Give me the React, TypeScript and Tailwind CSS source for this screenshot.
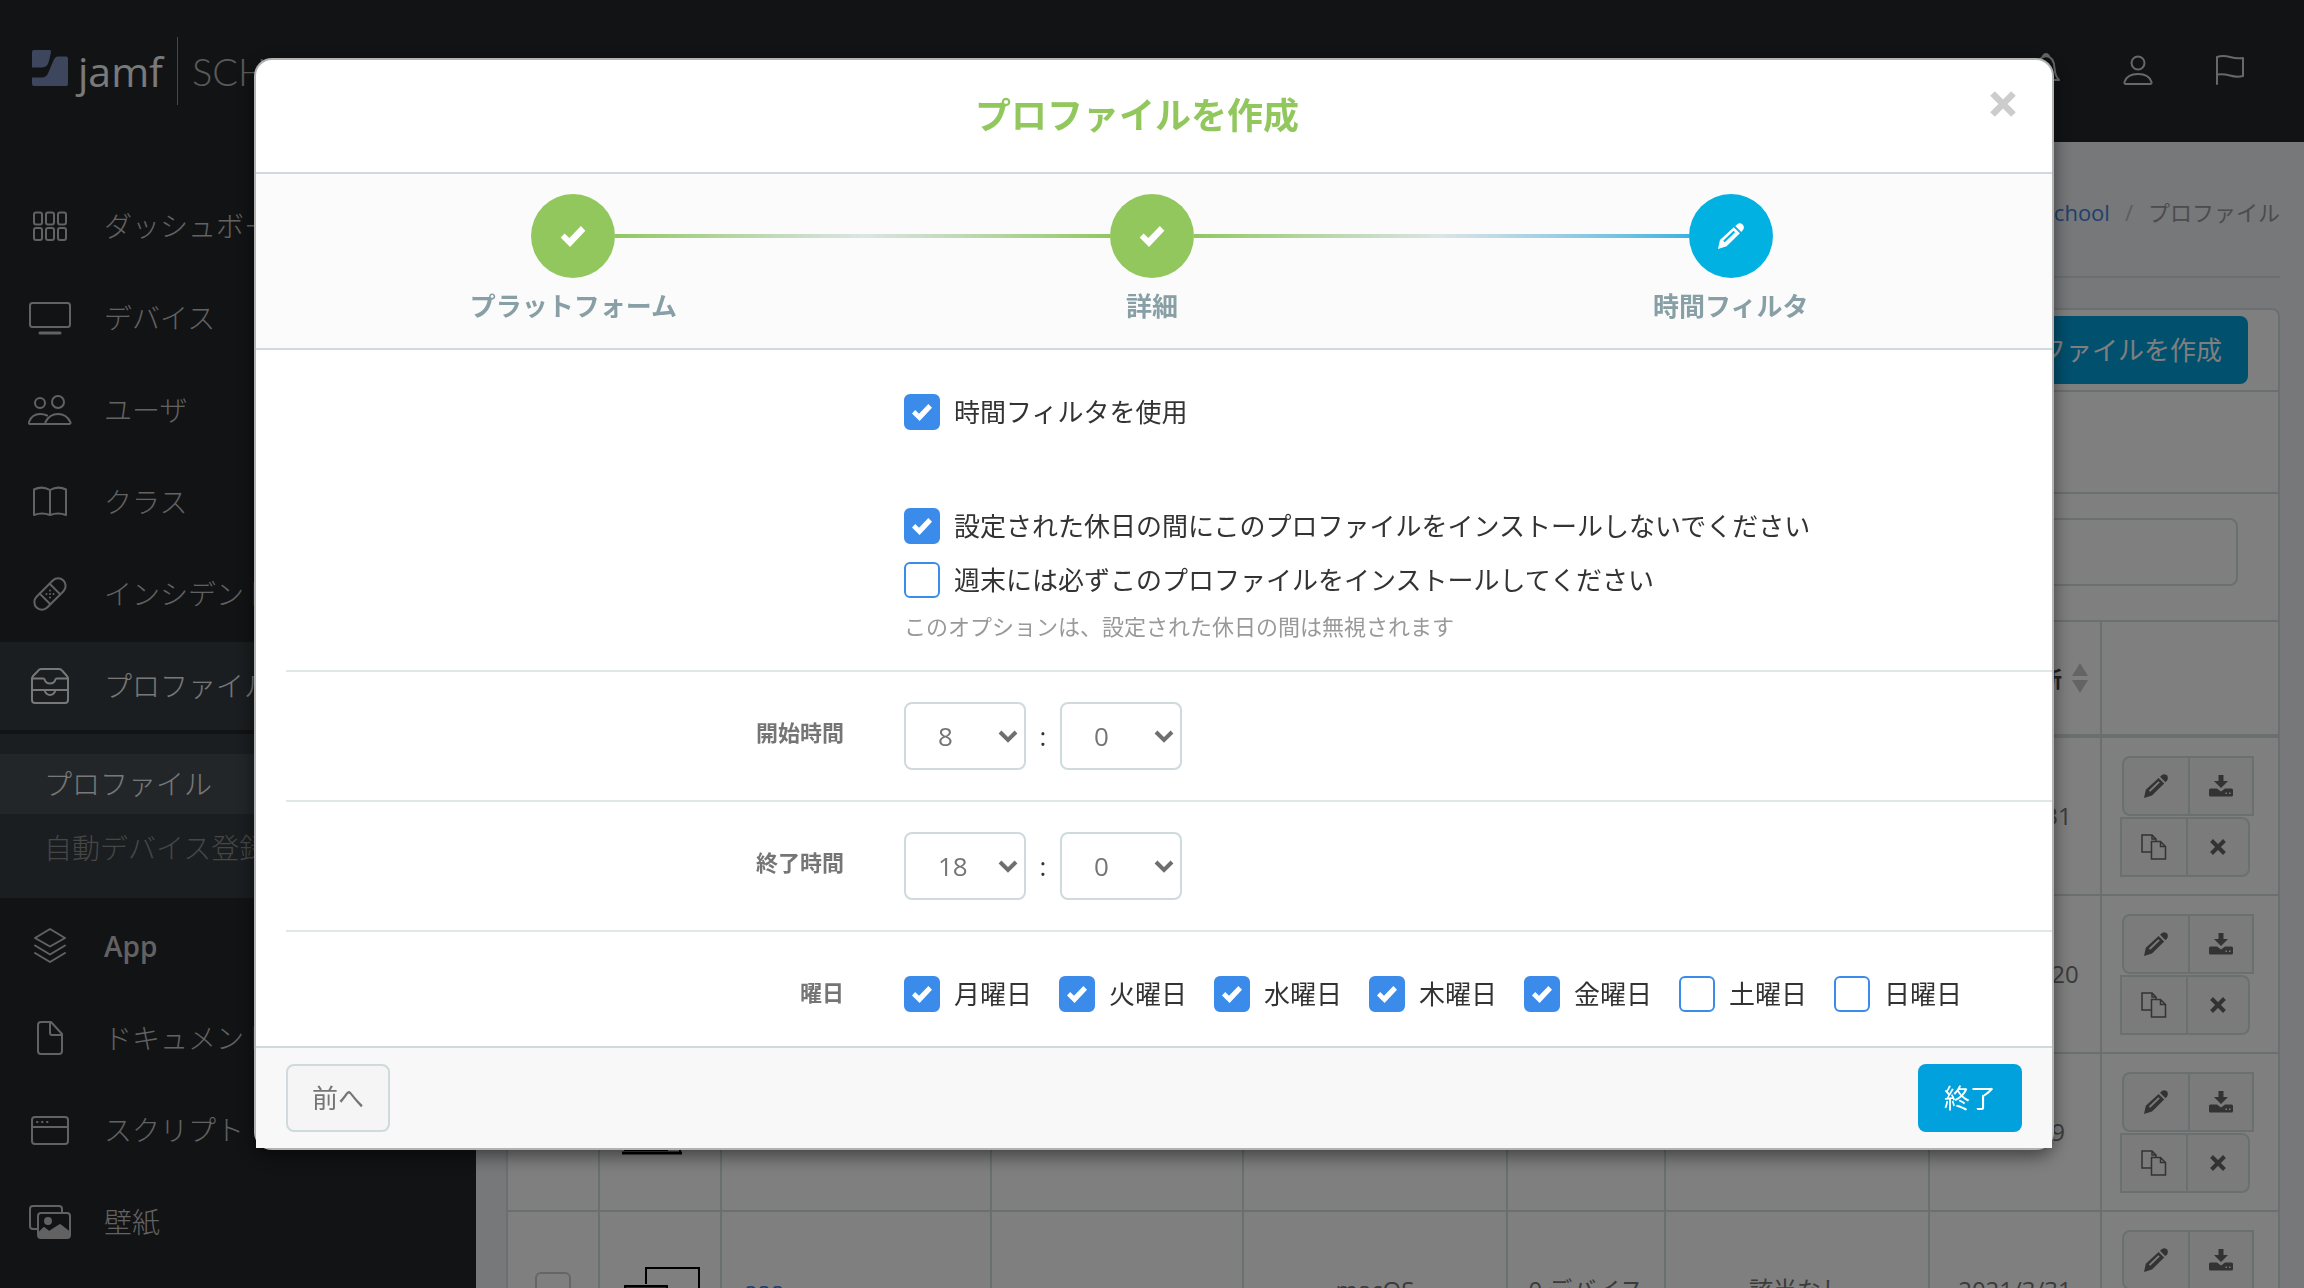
import { useState } from "react";
import type { ReactNode } from "react";

const CheckMark = ({ className }: { className?: string }) => (
  <svg viewBox="0 0 20 17" className={className} fill="currentColor">
    <path d="M0 9.4 3.2 6 7 9.8 16.4 0 20 3.8 7.6 17Z" />
  </svg>
);

const Pencil = ({ className }: { className?: string }) => (
  <svg viewBox="0 0 24 24" className={className} fill="currentColor">
    <path
      fillRule="evenodd"
      d="M0 24 1.8 15.8 14.6 4 20.2 9.4 8 21.4ZM6.2 17.8 15.8 8.6 14.4 7.2 4.8 16.4Z"
    />
    <path d="M16 2.8 18 .9Q20.400-.8 22.700 1.300 24.800 3.600 23.200 6.200L21.400 8.200Z" />
  </svg>
);

const Download = () => (
  <svg viewBox="0 0 24 22" className="h-[22px] w-6" fill="currentColor">
    <path d="M9.500 0h5v6h4.500l-7 7-7-7h4.500Z" />
    <path
      fillRule="evenodd"
      d="M1.500 13.500H8l4 3 4-3h6.500q1.500 0 1.500 1.500v5q0 1.500-1.500 1.500h-21Q0 21.500 0 20v-5q0-1.500 1.500-1.500ZM16.500 17.500v1.500h1.500v-1.500ZM20 17.500v1.500h1.500v-1.500Z"
    />
  </svg>
);

const Copy = () => (
  <svg
    viewBox="0 0 26 26"
    className="size-[26px]"
    fill="none"
    stroke="currentColor"
    strokeWidth="1.500"
  >
    <path d="M10 18H1V1h10l4 4v3M11 1v4h4" />
    <path d="M10.500 7.500h9l5 5V25h-14ZM19.500 7.500v5h5" />
  </svg>
);

const Cross = ({ className }: { className?: string }) => (
  <svg
    viewBox="0 0 26 26"
    className={className}
    stroke="currentColor"
    strokeWidth="6.500"
  >
    <path d="M2.500 2.500 23.500 23.500M23.500 2.500 2.500 23.500" />
  </svg>
);

const LineIcon = ({ children }: { children: ReactNode }) => (
  <svg
    viewBox="0 0 44 44"
    className="size-11 shrink-0"
    fill="none"
    stroke="currentColor"
    strokeWidth="2"
    strokeLinejoin="round"
    strokeLinecap="round"
  >
    {children}
  </svg>
);

const icons = {
  dashboard: (
    <LineIcon>
      {[6, 18, 30].map((x) =>
        [8.5, 24].map((y) => (
          <rect key={`${x}-${y}`} x={x} y={y} width="8" height="12" rx="2" />
        ))
      )}
    </LineIcon>
  ),
  devices: (
    <LineIcon>
      <rect x="2" y="7" width="40" height="24" rx="2.500" />
      <path d="M12 37h20" strokeWidth="3" />
    </LineIcon>
  ),
  users: (
    <LineIcon>
      <circle cx="12" cy="15" r="5" />
      <circle cx="30" cy="14" r="6" />
      <path d="M17 36H2Q.500 36 1 34 4 26 12 26q4 0 7 1.500M19 36h22.500q1.500 0 .800-2Q38.500 26 30 26t-12.500 8q-.500 2 1.500 2Z" />
    </LineIcon>
  ),
  classes: (
    <LineIcon>
      <path d="M22 10Q14 5.500 6 9.500V35q8-3 16 0 8-3 16 0V9.500Q30 5.500 22 10ZM22 10v25" />
    </LineIcon>
  ),
  incidents: (
    <LineIcon>
      <g transform="rotate(-45 22 22)">
        <rect x="3" y="14.500" width="38" height="15" rx="7.500" />
        <path d="M15 14.500v15M29 14.500v15" />
        <path d="M19.500 19.500v0M24.500 19.500v0M22 22v0M19.500 24.500v0M24.500 24.500v0" />
      </g>
    </LineIcon>
  ),
  profiles: (
    <LineIcon>
      <path d="M4 24.500V15q0-2 1.500-3.500l4-4Q11 5 13 5h18q2 0 3.500 2l4 4.500Q40 13 40 15v9.500" />
      <path d="M4 14.500h11.500q1 0 1.500 2 1 3 5 3t5-3q.500-2 1.500-2H40v11.500H4ZM4 26v10q0 3 3 3h30q3 0 3-3V26M16.500 26q1.500 5 5.500 5t5.500-5" />
    </LineIcon>
  ),
  apps: (
    <LineIcon>
      <path d="M22 5 37 14 22 22.500 7 14ZM7 21.500 22 30.500 37 21.500M7 29 22 38 37 29" />
    </LineIcon>
  ),
  documents: (
    <LineIcon>
      <path d="M23 6H13q-3 0-3 3v26q0 3 3 3h18q3 0 3-3V18ZM22 6v11q0 2 2 2h10" />
    </LineIcon>
  ),
  scripts: (
    <LineIcon>
      <rect x="4" y="9" width="36" height="27" rx="3" />
      <path d="M4 19h36M9 14h.500M14 14h.500M19 14h.500" />
    </LineIcon>
  ),
  wallpapers: (
    <LineIcon>
      <path d="M9 29H5q-3 0-3-3V9q0-3 3-3h26q3 0 3 3v3" />
      <rect x="10" y="13" width="32" height="25" rx="3" />
      <circle cx="20" cy="21" r="3" fill="currentColor" />
      <path
        fill="currentColor"
        d="M11 33 16 28l2.500 2 2.500 2 11-7 9 7v5H11Z"
      />
    </LineIcon>
  ),
};

const menuTop = [
  { icon: icons.dashboard, label: "ダッシュボード" },
  { icon: icons.devices, label: "デバイス" },
  { icon: icons.users, label: "ユーザ" },
  { icon: icons.classes, label: "クラス" },
  { icon: icons.incidents, label: "インシデント" },
  { icon: icons.profiles, label: "プロファイル", active: true },
];

const menuBottom = [
  { icon: icons.apps, label: "App" },
  { icon: icons.documents, label: "ドキュメント" },
  { icon: icons.scripts, label: "スクリプト" },
  { icon: icons.wallpapers, label: "壁紙" },
];

const rows = [
  { name: "aaa", date: "2021/3/31" },
  { name: "aaa", date: "2021/10/20" },
  { name: "aaa", date: "2021/4/9" },
  { name: "aaa", date: "2021/3/31" },
];

function MenuItem({
  icon,
  label,
  active,
}: {
  icon: ReactNode;
  label: string;
  active?: boolean;
}) {
  return (
    <a
      href="#"
      className={`flex h-[92px] items-center gap-8 border-y-2 border-[#24262a] pl-7 text-[28px] whitespace-nowrap ${
        active ? "bg-[#343c40] text-[#f0f0f0]" : "text-[#c4c4c4]"
      } ${label === "App" ? "font-semibold" : "font-light"}`}
    >
      {icon}
      {label}
    </a>
  );
}

function Sidebar() {
  return (
    <nav className="w-[476px] shrink-0 bg-[#24262a] pt-[38px]">
      {menuTop.map((item) => (
        <MenuItem key={item.label} {...item} />
      ))}
      <div className="my-0.5 flex flex-col gap-1 bg-[#343c40] py-5 text-[28px] leading-[60px] font-light">
        <a href="#" className="bg-[#444c50] pl-11 text-[#f0f0f0]">
          プロファイル
        </a>
        <a href="#" className="pl-11 text-[#8c8c8c]">
          自動デバイス登録プロファイル
        </a>
      </div>
      {menuBottom.map((item) => (
        <MenuItem key={item.label} {...item} />
      ))}
    </nav>
  );
}

function Header() {
  return (
    <header className="flex h-[142px] shrink-0 items-center justify-between bg-[#24262a] pr-[52px] pl-8">
      <div className="flex items-center">
        <svg viewBox="0 0 36 36" className="mb-1.5 size-9" fill="#7a8db8">
          <path d="M2 0h15.500q2 0 1.500 2-1 5-2 9-1.500 6.500-7 6.500H0V2Q0 0 2 0Z" />
          <path d="M26 6.500h8q2 0 2 2V34q0 2-2 2H2q-2 0-2-2v-6.500h10q4 0 6-4l5-12q2-5 5-5Z" />
        </svg>
        <span className="ml-2.5 text-[41px] leading-[60px] font-medium text-[#f4f4f4]">
          jamf
        </span>
        <span className="ml-3.5 h-[68px] w-px bg-[#8f8f8f]" />
        <span className="ml-3.5 font-[Lato] text-[38px] leading-[60px] font-light text-[#b4b4b4]">
          SCHOOL
        </span>
      </div>
      <div className="flex gap-12 text-[#d0d0d0]">
        <button aria-label="通知">
          <LineIcon>
            <path d="M9 31q4-4 4.500-12Q14 8 22 7q8 1 8.500 12Q31 27 35 31ZM19 7q3-4 6 0M18 31q1 5 4 5t4-5" />
          </LineIcon>
        </button>
        <button aria-label="アカウント">
          <LineIcon>
            <circle cx="22" cy="14" r="6.500" />
            <path d="M10 35h24q2 0 1.500-2Q33 25 22 25T8.500 33Q8 35 10 35Z" />
          </LineIcon>
        </button>
        <button aria-label="フラグ">
          <LineIcon>
            <path d="M9 35V8q6-2 13 0t13 1v18q-6 1.500-13-.500T9 25.500" />
          </LineIcon>
        </button>
      </div>
    </header>
  );
}

function DeviceIcon() {
  return (
    <svg viewBox="0 0 80 48" className="h-12 w-20" fill="none" stroke="#000" strokeWidth="2">
      <path d="M24 18V2h53v34H52M58 36v8M50 45h10" />
      <path fill="#555" d="M3 20h42v22H3Z" />
      <path d="M0 45h60" strokeWidth="3" />
    </svg>
  );
}

const actionButton =
  "grid h-[60px] place-items-center border-2 border-[#d4e0e0] bg-[#f6f6f6] text-[#666]";

function RowActions() {
  return (
    <div className="flex flex-col gap-px pl-[18px]">
      <div className="flex pl-0.5">
        <button aria-label="編集" className={`${actionButton} w-[68px] rounded-l-lg`}>
          <Pencil className="size-6" />
        </button>
        <button aria-label="ダウンロード" className={`${actionButton} -ml-0.5 w-[66px]`}>
          <Download />
        </button>
      </div>
      <div className="flex">
        <button aria-label="複製" className={`${actionButton} w-[68px]`}>
          <Copy />
        </button>
        <button aria-label="削除" className={`${actionButton} -ml-0.5 w-[64px] rounded-r-lg`}>
          <Cross className="size-4" />
        </button>
      </div>
    </div>
  );
}

function ProfileList() {
  return (
    <main className="min-w-0 flex-1 bg-[#eef0f4] pr-6 pl-[30px]">
      <div className="flex h-[136px] items-center justify-end gap-[15px] border-b-2 border-[#d4e0e0] pt-1.5 text-[22px]">
        <a href="#" className="text-[#3f80d8]">
          Jamf School
        </a>
        <span className="text-[#bbb]">/</span>
        <span className="text-[#999]">プロファイル</span>
      </div>

      <section className="mt-[30px] rounded-t-lg border-2 border-[#d4e0e0] bg-white">
        <div className="flex h-[82px] items-center justify-end border-b-2 border-[#d4e0e0] pr-[30px]">
          <button className="h-[68px] rounded-lg bg-[#00a0dc] px-[26px] text-[26px] text-white">
            プロファイルを作成
          </button>
        </div>
        <div className="h-[102px] border-b-2 border-[#d4e0e0]" />
        <div className="flex h-32 items-start justify-end border-b-2 border-[#d4e0e0] pt-6 pr-10">
          <input
            type="search"
            aria-label="検索"
            className="h-[68px] w-[440px] rounded-lg border-2 border-[#d4e0e0] bg-white"
          />
        </div>
        <table className="w-full table-fixed border-separate border-spacing-0 text-center text-[24px] text-[#777]">
          <colgroup>
            <col className="w-[92px]" />
            <col className="w-[122px]" />
            <col className="w-[270px]" />
            <col className="w-[252px]" />
            <col className="w-[264px]" />
            <col className="w-[158px]" />
            <col className="w-[264px]" />
            <col className="w-[172px]" />
            <col />
          </colgroup>
          <thead>
            <tr className="h-[116px] text-[22px] text-[#444] [&>th]:border-b-4 [&>th]:border-[#d4e0e0] [&>th:not(:last-child)]:border-r-2">
              <th />
              <th />
              <th>名前</th>
              <th>説明</th>
              <th>プラットフォーム</th>
              <th>デバイス</th>
              <th>時間フィルタ</th>
              <th>
                <div className="flex items-center justify-end gap-2.5 pr-3">
                  最終更新
                  <svg viewBox="0 0 16 30" className="h-[30px] w-4" fill="#c8c8c8">
                    <path d="M8 0 16 13H0ZM8 30 0 17h16Z" />
                  </svg>
                </div>
              </th>
              <th />
            </tr>
          </thead>
          <tbody>
            {rows.map((row, index) => (
              <tr
                key={index}
                className="h-[158px] [&>td]:border-b-2 [&>td]:border-[#d4e0e0] [&>td:not(:last-child)]:border-r-2"
              >
                <td>
                  <input
                    type="checkbox"
                    aria-label={row.name}
                    className="mx-auto block size-9 appearance-none rounded-md border-2 border-[#ccc]"
                  />
                </td>
                <td className="pl-[22px]">
                  <DeviceIcon />
                </td>
                <td className="pl-[22px] text-left">
                  <a href="#" className="text-[#3f80d8]">
                    {row.name}
                  </a>
                </td>
                <td />
                <td>macOS</td>
                <td>0 デバイス</td>
                <td>該当なし</td>
                <td>{row.date}</td>
                <td>
                  <RowActions />
                </td>
              </tr>
            ))}
          </tbody>
        </table>
      </section>
    </main>
  );
}

function Checkbox({ label, checked }: { label: string; checked?: boolean }) {
  return (
    <label className="flex items-center gap-3.5 text-[26px] leading-9 whitespace-nowrap text-[#333]">
      <span className="grid place-items-center">
        <input
          type="checkbox"
          defaultChecked={checked}
          className="peer col-start-1 row-start-1 size-9 appearance-none rounded-md border-2 border-[#3b8beb] bg-white checked:bg-[#3b8beb]"
        />
        <CheckMark className="pointer-events-none col-start-1 row-start-1 hidden h-[17px] w-5 text-white peer-checked:block" />
      </span>
      {label}
    </label>
  );
}

function NumberSelect({
  label,
  value,
  count,
}: {
  label: string;
  value: number;
  count: number;
}) {
  return (
    <span className="grid items-center">
      <select
        aria-label={label}
        defaultValue={value}
        className="col-start-1 row-start-1 h-[68px] w-[122px] appearance-none rounded-lg border-2 border-[#cfdadd] bg-white pl-8 text-[26px] text-[#757575]"
      >
        {Array.from({ length: count }, (_, n) => (
          <option key={n}>{n}</option>
        ))}
      </select>
      <svg
        viewBox="0 0 20 13"
        className="pointer-events-none col-start-1 row-start-1 mr-2 h-[13px] w-5 justify-self-end text-[#6f6f6f]"
        fill="none"
        stroke="currentColor"
        strokeWidth="4"
      >
        <path d="M2 2 10 10 18 2" />
      </svg>
    </span>
  );
}

function FormRow({ label, children }: { label: string; children: ReactNode }) {
  return (
    <div
      role="group"
      aria-label={label}
      className="ml-[30px] flex border-t-2 border-[#dfe7e9] py-[30px]"
    >
      <div className="w-[558px] shrink-0 pt-[14px] text-right text-[22px] leading-8 font-bold text-[#757575]">
        {label}
      </div>
      <div className="ml-[60px] flex items-center">{children}</div>
    </div>
  );
}

function TimeRow({ label, hour }: { label: string; hour: number }) {
  return (
    <FormRow label={label}>
      <NumberSelect label={`${label} (時)`} value={hour} count={24} />
      <span className="w-[34px] text-center text-[26px] text-[#333]">:</span>
      <NumberSelect label={`${label} (分)`} value={0} count={60} />
    </FormRow>
  );
}

function Step({
  label,
  icon,
  circle,
  before,
  after,
}: {
  label: string;
  icon: ReactNode;
  circle: string;
  before: string;
  after: string;
}) {
  return (
    <li className="flex flex-1 flex-col items-center">
      <div className="flex w-full items-center">
        <span className={`h-1 flex-1 ${before}`} />
        <span className={`grid size-[84px] place-items-center rounded-full text-white ${circle}`}>
          {icon}
        </span>
        <span className={`h-1 flex-1 ${after}`} />
      </div>
      <span className="mt-2 text-[26px] leading-10 font-bold text-[#879fa5]">
        {label}
      </span>
    </li>
  );
}

const days = [
  { label: "月曜日", checked: true },
  { label: "火曜日", checked: true },
  { label: "水曜日", checked: true },
  { label: "木曜日", checked: true },
  { label: "金曜日", checked: true },
  { label: "土曜日", checked: false },
  { label: "日曜日", checked: false },
];

function ProfileModal({ onClose }: { onClose: () => void }) {
  return (
    <div
      role="dialog"
      aria-labelledby="modal-title"
      className="w-full max-w-[1800px] rounded-[18px] border-2 border-black/30 bg-white shadow-[0_6px_18px_rgba(0,0,0,0.5)]"
    >
      <div className="flex h-[112px] items-center pr-9 pl-7">
        <h1
          id="modal-title"
          className="flex-1 text-center text-[36px] font-bold text-[#92c75e]"
        >
          プロファイルを作成
        </h1>
        <button aria-label="閉じる" onClick={onClose} className="mb-6 text-[#ccc]">
          <Cross className="size-[26px]" />
        </button>
      </div>

      <ol className="flex h-[178px] border-y-2 border-[#cfdadd] bg-[#fbfbfb] pt-5 pr-8 pl-7">
        <Step
          label="プラットフォーム"
          icon={<CheckMark className="h-[21px] w-[26px]" />}
          circle="bg-[#92c75e]"
          before=""
          after="bg-linear-to-r from-[#92c75e] to-[#dce4e6]"
        />
        <Step
          label="詳細"
          icon={<CheckMark className="h-[21px] w-[26px]" />}
          circle="bg-[#92c75e]"
          before="bg-linear-to-r from-[#dce4e6] to-[#92c75e]"
          after="bg-linear-to-r from-[#92c75e] to-[#dce4e6]"
        />
        <Step
          label="時間フィルタ"
          icon={<Pencil className="size-[26px]" />}
          circle="bg-[#00b1e1]"
          before="bg-linear-to-r from-[#dce4e6] to-[#38b3e0]"
          after=""
        />
      </ol>

      <div className="flex flex-col items-start pt-11 pb-[26px] pl-[648px]">
        <Checkbox label="時間フィルタを使用" checked />
        <div className="mt-[78px] flex flex-col gap-[18px]">
          <Checkbox
            label="設定された休日の間にこのプロファイルをインストールしないでください"
            checked
          />
          <Checkbox label="週末には必ずこのプロファイルをインストールしてください" />
        </div>
        <p className="mt-2.5 text-[22px] leading-9 text-[#999]">
          このオプションは、設定された休日の間は無視されます
        </p>
      </div>

      <TimeRow label="開始時間" hour={8} />
      <TimeRow label="終了時間" hour={18} />
      <FormRow label="曜日">
        <div className="flex gap-[27px] pt-3.5 pb-1">
          {days.map((day) => (
            <Checkbox key={day.label} {...day} />
          ))}
        </div>
      </FormRow>

      <div className="flex justify-between border-t-2 border-[#cfdadd] bg-[#f8f8f8] px-[30px] py-4">
        <button className="h-[68px] w-[104px] rounded-lg border-2 border-[#cfdadd] bg-[#f5f5f5] text-[26px] text-[#757575]">
          前へ
        </button>
        <button className="h-[68px] w-[104px] rounded-lg bg-[#00a1dd] text-[26px] text-white">
          終了
        </button>
      </div>
    </div>
  );
}

export default function App() {
  const [open, setOpen] = useState(true);

  return (
    <div className="flex h-screen flex-col overflow-hidden font-['Open_Sans','Noto_Sans_CJK_JP',sans-serif]">
      <Header />
      <div className="flex flex-1">
        <Sidebar />
        <ProfileList />
      </div>
      {open && (
        <div className="fixed inset-0 flex items-start justify-center bg-black/50 pt-[58px] pl-1">
          <ProfileModal onClose={() => setOpen(false)} />
        </div>
      )}
    </div>
  );
}
